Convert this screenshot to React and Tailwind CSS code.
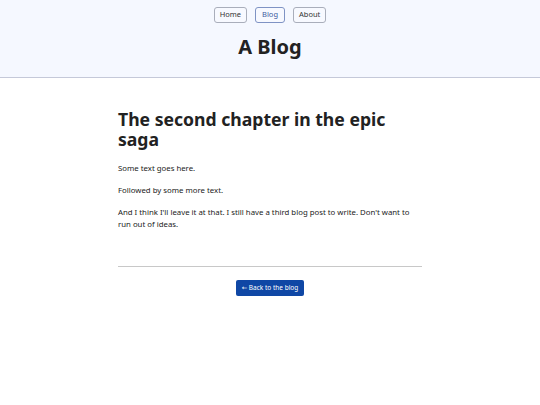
import React from 'react';

const font = { fontFamily: '"Noto Sans", "DejaVu Sans", sans-serif' };

function NavButton({ label, active }) {
  return (
    <a
      href="#"
      className={
        active
          ? 'flex h-4 items-center rounded-[3px] border border-[#7f93c4] bg-[#f7f9ff] px-[6px] text-[7.5px] text-[#3b5a9e]'
          : 'flex h-4 items-center rounded-[3px] border border-[#a9aebb] bg-[#f7f9ff] px-[5px] text-[7.5px] text-[#333]'
      }
    >
      {label}
    </a>
  );
}

export default function App() {
  return (
    <div className="min-h-[405px] bg-white text-[#222]" style={font}>
      <header className="flex h-[78px] flex-col items-center border-b border-[#c5c9d9] bg-[#f5f8ff] pt-[7px]">
        <nav className="flex gap-[8px]">
          <NavButton label="Home" />
          <NavButton label="Blog" active />
          <NavButton label="About" />
        </nav>
        <h1 className="mt-[9px] text-[20px] font-bold leading-[30px]">A Blog</h1>
      </header>

      <main className="mx-auto w-[304px] pt-[31px]">
        <h2 className="text-[17.6px] font-bold leading-[20px] text-[#222]">
          The second chapter in the epic saga
        </h2>
        <div className="mt-[13px] flex flex-col gap-[10px] text-[7.8px] leading-[12px] text-[#222]">
          <p>Some text goes here.</p>
          <p>Followed by some more text.</p>
          <p>
            And I think I'll leave it at that. I still have a third blog post to write. Don't want to run out of
            ideas.
          </p>
        </div>
        <hr className="mt-[36px] border-t border-[#c8c8c8]" />
        <div className="mt-[13px] flex justify-center">
          <a
            href="#"
            className="flex h-4 items-center rounded-[2px] bg-[#0f47a5] px-[6px] text-[6.5px] text-white"
          >
            ← Back to the blog
          </a>
        </div>
      </main>
    </div>
  );
}
